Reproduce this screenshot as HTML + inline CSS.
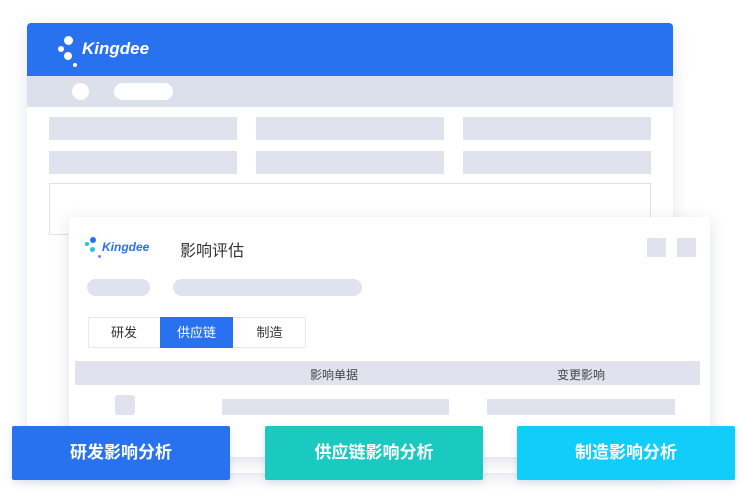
<!DOCTYPE html>
<html><head><meta charset="utf-8"><style>
*{margin:0;padding:0;box-sizing:border-box}
body{width:747px;height:499px;background:#fff;position:relative;overflow:hidden;font-family:"Liberation Sans","Noto Sans CJK SC",sans-serif}
.a{position:absolute}
.g{background:#e0e3ee}
.b{border-radius:2px;box-shadow:0 3px 8px rgba(40,80,160,.15)}
</style></head><body>
<div class="a" style="left:27px;top:23px;width:646px;height:450px;background:#fff;box-shadow:0 4px 16px rgba(60,80,140,.15);border-radius:4px;overflow:hidden">
 <div class="a" style="left:0;top:0;width:646px;height:53px;background:#2872f0"></div>
 <div class="a" style="left:0;top:53px;width:646px;height:31px;background:#dce0ea"></div>
 <div class="a" style="left:45px;top:60px;width:17px;height:17px;border-radius:50%;background:#fff"></div>
 <div class="a" style="left:87px;top:60px;width:59px;height:17px;border-radius:9px;background:#fff"></div>
 <div class="a" style="left:37px;top:13px;width:9px;height:9px;border-radius:50%;background:#fff"></div>
 <div class="a" style="left:31px;top:23px;width:6px;height:6px;border-radius:50%;background:#fff"></div>
 <div class="a" style="left:37px;top:29px;width:8px;height:8px;border-radius:50%;background:#fff"></div>
 <div class="a" style="left:46px;top:40px;width:4px;height:4px;border-radius:50%;background:#fff"></div>
 <div class="a" style="left:55px;top:16px;color:#fff;font-style:italic;font-weight:bold;font-size:17px">Kingdee</div>
 <div class="a g" style="left:22px;top:94px;width:188px;height:23px"></div>
 <div class="a g" style="left:229px;top:94px;width:188px;height:23px"></div>
 <div class="a g" style="left:436px;top:94px;width:188px;height:23px"></div>
 <div class="a g" style="left:22px;top:128px;width:188px;height:23px"></div>
 <div class="a g" style="left:229px;top:128px;width:188px;height:23px"></div>
 <div class="a g" style="left:436px;top:128px;width:188px;height:23px"></div>
 <div class="a" style="left:22px;top:160px;width:602px;height:52px;border:1px solid #dfe2ea"></div>
</div>
<div class="a" style="left:69px;top:217px;width:641px;height:240px;background:#fff;border-radius:4px;box-shadow:0 4px 16px rgba(60,80,140,.18)">
 <div class="a" style="left:21px;top:20px;width:6px;height:6px;border-radius:50%;background:#2872f0"></div>
 <div class="a" style="left:16px;top:25px;width:4px;height:4px;border-radius:50%;background:#1fc8d8"></div>
 <div class="a" style="left:21px;top:30px;width:5px;height:5px;border-radius:50%;background:#1fc8d8"></div>
 <div class="a" style="left:29px;top:38px;width:3px;height:3px;border-radius:50%;background:#a070f0"></div>
 <div class="a" style="left:33px;top:23px;color:#2872f0;font-style:italic;font-weight:bold;font-size:12px">Kingdee</div>
 <div class="a" style="left:111px;top:20px;font-size:16px;color:#333">影响评估</div>
 <div class="a g" style="left:578px;top:21px;width:19px;height:19px"></div>
 <div class="a g" style="left:608px;top:21px;width:19px;height:19px"></div>
 <div class="a g" style="left:18px;top:62px;width:63px;height:17px;border-radius:9px"></div>
 <div class="a g" style="left:104px;top:62px;width:189px;height:17px;border-radius:9px"></div>
 <div class="a" style="left:19px;top:100px;width:218px;height:31px;border:1px solid #e6e8ef"></div>
 <div class="a" style="left:19px;top:100px;width:72px;height:31px;line-height:31px;text-align:center;font-size:13px;color:#333">研发</div>
 <div class="a" style="left:91px;top:100px;width:73px;height:31px;line-height:31px;text-align:center;font-size:13px;color:#fff;background:#2872f0">供应链</div>
 <div class="a" style="left:164px;top:100px;width:73px;height:31px;line-height:31px;text-align:center;font-size:13px;color:#333">制造</div>
 <div class="a g" style="left:6px;top:144px;width:625px;height:24px"></div>
 <div class="a" style="left:241px;top:149px;font-size:12px;color:#444">影响单据</div>
 <div class="a" style="left:488px;top:149px;font-size:12px;color:#444">变更影响</div>
 <div class="a g" style="left:46px;top:178px;width:20px;height:20px;border-radius:3px"></div>
 <div class="a g" style="left:153px;top:182px;width:227px;height:16px"></div>
 <div class="a g" style="left:418px;top:182px;width:188px;height:16px"></div>
</div>
<div class="a b" style="left:12px;top:426px;width:218px;height:54px;background:#2872f0;color:#fff;font-size:17px;font-weight:bold;line-height:54px;text-align:center">研发影响分析</div>
<div class="a b" style="left:265px;top:426px;width:218px;height:54px;background:#1ac9bf;color:#fff;font-size:17px;font-weight:bold;line-height:54px;text-align:center">供应链影响分析</div>
<div class="a b" style="left:517px;top:426px;width:218px;height:54px;background:#11cdfa;color:#fff;font-size:17px;font-weight:bold;line-height:54px;text-align:center">制造影响分析</div>
</body></html>
